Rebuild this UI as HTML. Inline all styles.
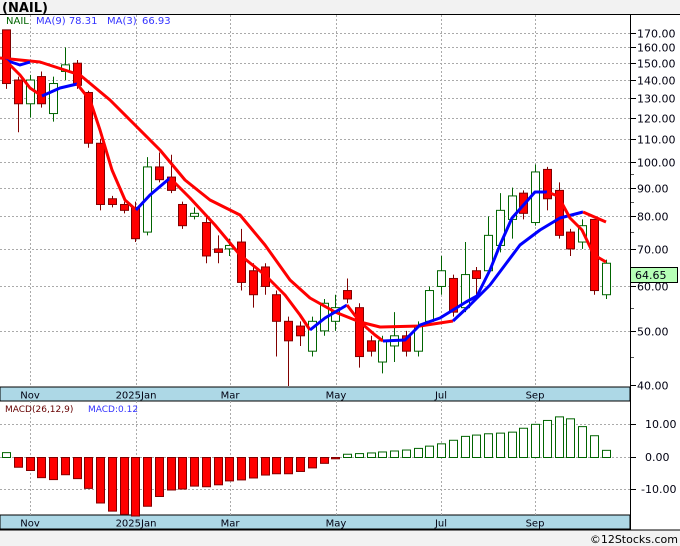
<!DOCTYPE html><html><head><meta charset="utf-8"><style>
body{margin:0;width:680px;height:546px;background:#f2f2f2;overflow:hidden;font-family:"Liberation Sans","DejaVu Sans",sans-serif}
svg{display:block}
svg text{font-family:"DejaVu Sans","Liberation Sans",sans-serif}
</style></head><body>
<svg id="s" width="680" height="546" xmlns="http://www.w3.org/2000/svg">
<rect x="0" y="0" width="680" height="546" fill="#f2f2f2"/>
<rect x="0" y="14" width="680" height="516" fill="#fff"/>
<text x="2" y="12" font-size="13" font-weight="bold" fill="#000">(NAIL)</text>
<g id="g"></g>
<line x1="630.5" y1="14" x2="630.5" y2="530" stroke="#000"/>
<line x1="0" y1="14.5" x2="680" y2="14.5" stroke="#000"/>
<line x1="0" y1="530" x2="680" y2="530" stroke="#000"/>
<text x="6" y="24" font-size="10" fill="#006400">NAIL</text>
<text x="36" y="24" font-size="10" fill="#3333ff">MA(9)  78.31</text>
<text x="107" y="24" font-size="10" fill="#3333ff">MA(3)</text>
<text x="142" y="24" font-size="10" fill="#3333ff">66.93</text>
<text x="5" y="412" font-size="9" fill="#600">MACD(26,12,9)</text>
<text x="88" y="412" font-size="9" fill="#3333ff">MACD:0.12</text>
<text x="678" y="543" font-size="11" fill="#000" text-anchor="end">©12Stocks.com</text>
</svg>
<script>
var g=document.getElementById('g'),h='';
function Y(p){return 162-561*Math.log10(p/100);}
h+='<rect x="0" y="387" width="630" height="14" fill="#add8e6" stroke="#000" stroke-width="1"/>';
h+='<rect x="0" y="515" width="630" height="14" fill="#add8e6" stroke="#000" stroke-width="1"/>';
var mon=[[30,'Nov'],[136,'2025Jan'],[230,'Mar'],[336,'May'],[441,'Jul'],[535,'Sep']];
mon.forEach(function(m){h+='<line x1="'+m[0]+'.5" y1="15" x2="'+m[0]+'.5" y2="387" stroke="#aaa" stroke-dasharray="2,2"/>';
h+='<line x1="'+m[0]+'.5" y1="401" x2="'+m[0]+'.5" y2="515" stroke="#aaa" stroke-dasharray="2,2"/>';
h+='<text x="'+m[0]+'" y="398.5" font-size="10" text-anchor="middle" fill="#001">'+m[1]+'</text>';
h+='<text x="'+m[0]+'" y="526.5" font-size="10" text-anchor="middle" fill="#001">'+m[1]+'</text>';});
[40,50,60,70,80,90,100,110,120,130,140,150,160,170].forEach(function(p){var y=Math.round(Y(p))+.5;
if(p>40)h+='<line x1="0" y1="'+y+'" x2="630" y2="'+y+'" stroke="#aaa" stroke-dasharray="2,2"/>';
h+='<line x1="630" y1="'+y+'" x2="636" y2="'+y+'" stroke="#000"/>';
h+='<text x="637" y="'+(y+4)+'" font-size="11" fill="#001">'+p+'.00</text>';});
[45,55,65,75,85,95].forEach(function(p){var y=Math.round(Y(p))+.5;h+='<line x1="630" y1="'+y+'" x2="634" y2="'+y+'" stroke="#555"/>';});
[[424,'10.00'],[457,'0.00'],[489,'-10.00']].forEach(function(a){h+='<line x1="0" y1="'+a[0]+'.5" x2="630" y2="'+a[0]+'.5" stroke="#aaa" stroke-dasharray="2,2"/><line x1="630" y1="'+a[0]+'.5" x2="636" y2="'+a[0]+'.5" stroke="#000"/><text x="'+(a[1][0]=='-'?641:645)+'" y="'+(a[0]+4)+'" font-size="11" fill="#001">'+a[1]+'</text>';});
var c=[[172,138,172,135],[140,127,142,113],[127,140,143,120],[142,127,145,125],[122,138,142,118],[145,149,160,140],[150,137,152,135],[133,108,134,106],[108,84,110,82],[86,84,87,83],[84,82,85,81],[83,73,85,72],[75,98,102,74],[98,93,104,92],[94,89,103,88],[84,77,85,76],[80,81,83,79],[78,68,80,66],[70,69,74,66],[70,71,73,68],[72,61,76,59],[64,58,66,55],[65,60,66,58],[58,52,59,45],[52,48,53,38],[51,49,52,47],[46,52,53,45],[50,56,57,49],[52,55,58,50],[59,57,62,56],[55,45,56,43],[48,46,49,45],[44,48,49,42],[47,49,54,44],[49,46,50,45],[46,51,52,45],[52,59,60,51],[60,64,68,58],[62,54,63,53],[55,63,72,54],[64,62,65,57],[64,74,80,63],[71,82,88,69],[79,87,90,73],[88,81,89,79],[78,96,99,77],[97,86,98,82],[89,74,92,73],[75,70,76,68],[72,77,79,70],[79,59,79,58],[58,66,67,57]];
c.forEach(function(d,i){var x=Math.round(6+11.76*i),up=d[1]>=d[0],col=up?'#006400':'#800000';
var t=Y(Math.max(d[0],d[1])),b=Y(Math.min(d[0],d[1]));if(b-t<3)b=t+3;
h+='<line x1="'+(x+.5)+'" y1="'+Y(d[2])+'" x2="'+(x+.5)+'" y2="'+Math.min(386,Y(d[3]))+'" stroke="'+col+'"/>';
h+='<rect x="'+(x-3.5)+'" y="'+t+'" width="8" height="'+(b-t)+'" fill="'+(up?'#fff':'#f00')+'" stroke="'+col+'"/>';});
function pl(p,col){h+='<polyline points="'+p+'" fill="none" stroke="'+col+'" stroke-width="3" stroke-linejoin="round"/>';}
pl('0,58 40,62 80,75 110,100 135,125 160,150 185,180 210,200 240,215 265,245 290,280 310,298 335,312 360,322 380,327 420,326 453,321','#f00');
pl('453,321 470,305 490,285 505,265 520,245 540,230 560,218 583,212','#00f');
pl('583,212 606,222','#f00');
pl('5,60 20,65 30,62','#00f');
pl('5,60 20,75 30,88 42,96','#f00');
pl('42,96 60,88 77,84','#00f');
pl('77,84 90,100 100,130 112,170 125,200 136,210','#f00');
pl('136,210 150,195 170,178','#00f');
pl('170,178 190,198 215,225 240,255 265,275 285,295 300,315 310,330','#f00');
pl('310,330 325,318 347,305','#00f');
pl('347,305 360,322 375,335 383,341','#f00');
pl('383,341 405,340 420,325 440,318 453,310 466,302 477,296 490,270 500,245 512,218 535,192 547,192','#00f');
pl('547,192 558,196 570,218 582,230 594,255 606,262','#f00');
h+='<rect x="630.5" y="267.5" width="47" height="15" fill="#b6ffb6" stroke="#000"/><text x="635" y="279" font-size="11" fill="#001">64.65</text>';
var m=[1.5,-3,-4,-6.2,-6.8,-5.3,-6.5,-9.5,-14,-16.5,-17.5,-18,-15,-12,-10,-9.7,-8.8,-9,-8.4,-7.2,-6.9,-6.3,-5.4,-5,-5,-4.3,-3.2,-1.8,-.4,1,1.2,1.4,1.7,2,2.3,2.8,3.5,4.2,5.3,6.5,6.9,7.3,7.5,7.8,9,10.2,11.4,12.5,11.9,9.5,6.7,2.2];
m.forEach(function(v,i){var x=Math.round(6+11.76*i),up=v>=0,z=457,y=z-v*3.25;
h+='<rect x="'+(x-3.5)+'" y="'+(Math.min(y,z)+.5)+'" width="8" height="'+Math.max(1,Math.abs(y-z))+'" fill="'+(up?'#fff':'#f00')+'" stroke="'+(up?'#006400':'#800000')+'"/>';});
g.innerHTML=h;
</script>
</body></html>
